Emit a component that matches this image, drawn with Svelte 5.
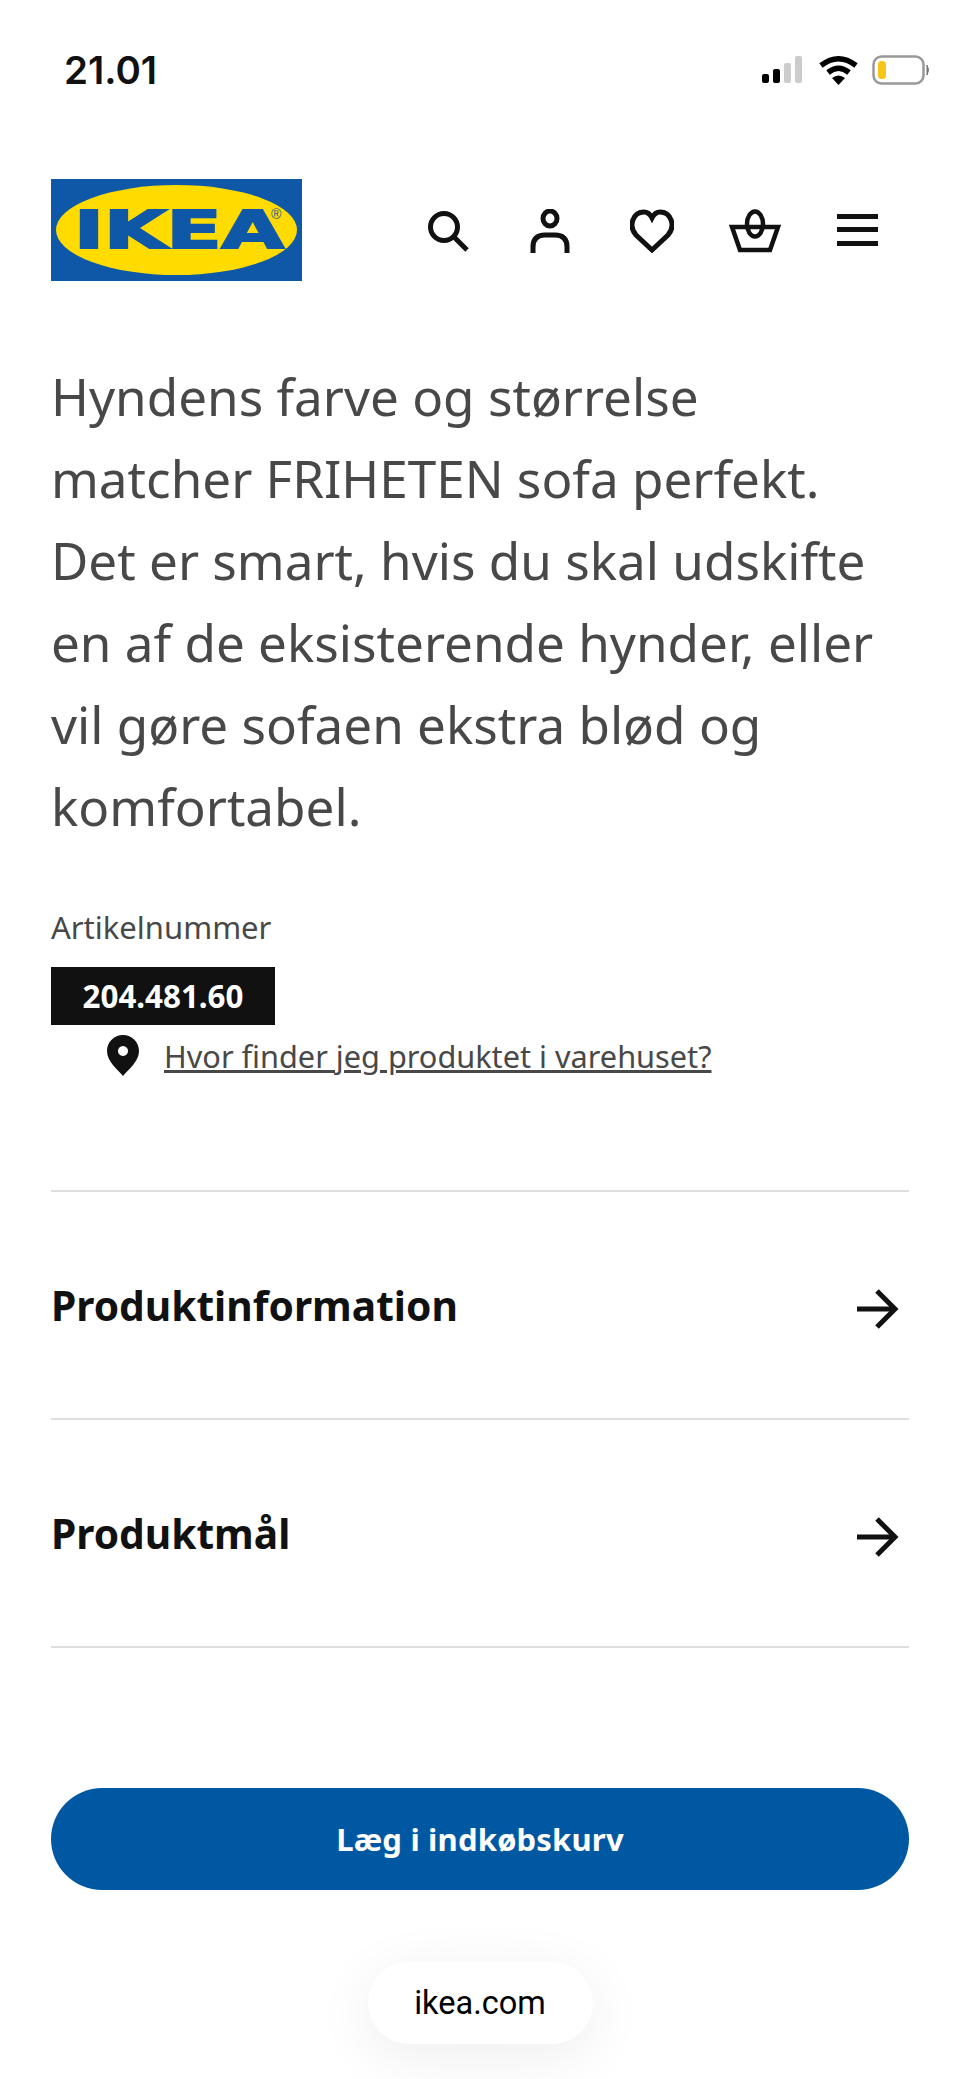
<script>
    const sections = ["Produktinformation", "Produktmål"];
</script>

<main>
    <div class="status">
        <span class="time">21.01</span>
        <div class="status-icons">
            <svg width="44" height="28" viewBox="0 0 44 28">
                <rect x="1" y="18" width="7" height="9" rx="2" fill="#000" />
                <rect x="12" y="13" width="7" height="14" rx="2" fill="#000" />
                <rect x="23" y="7" width="7" height="20" rx="2" fill="#ccc" />
                <rect x="34" y="0" width="7" height="27" rx="2" fill="#ccc" />
            </svg>
            <svg width="39" height="30" viewBox="0 0 39 30">
                <path d="M2 10.500 Q19.500 -3 37 10.500" fill="none" stroke="#000" stroke-width="5.500" />
                <path d="M9 17.500 Q19.500 9 30 17.500" fill="none" stroke="#000" stroke-width="5.500" />
                <path d="M13 23 Q19.500 18 26 23 L19.500 30 Z" fill="#000" />
            </svg>
            <svg width="59" height="30" viewBox="0 0 59 30">
                <rect x="1.500" y="1.500" width="50" height="27" rx="8" fill="none" stroke="#999" stroke-width="2.500" />
                <rect x="6" y="6" width="8" height="18" rx="3.500" fill="#f5c518" />
                <path d="M55 10 Q58 15 55 20 Z" fill="#777" stroke="#777" />
            </svg>
        </div>
    </div>

    <header>
        <svg class="logo" width="251" height="102" viewBox="0 0 251 102">
            <rect width="251" height="102" fill="#0f58a8" />
            <ellipse cx="125.500" cy="51" rx="120.500" ry="45" fill="#ffdb00" />
            <text x="23" y="68.500" class="wordmark" textLength="210" lengthAdjust="spacingAndGlyphs">IKEA</text>
            <text x="220" y="40" class="registered">®</text>
        </svg>
        <nav>
            <svg width="44" height="44" viewBox="0 0 44 44" fill="none" stroke="#111" stroke-width="5">
                <circle cx="18" cy="18" r="13.500" />
                <path d="M27 27 L41 41" />
            </svg>
            <svg width="44" height="44" viewBox="0 0 44 44" fill="none" stroke="#111" stroke-width="5">
                <ellipse cx="22" cy="9.500" rx="7" ry="7.500" />
                <path d="M5 44 V38 Q5 26 17 26 H27 Q39 26 39 38 V44" />
            </svg>
            <svg width="44" height="44" viewBox="0 0 44 44" fill="none" stroke="#111" stroke-width="5">
                <path d="M22 41 L6 26 C-2 17 3 3 14 3 C18 3 20 5 22 9 C24 5 26 3 30 3 C41 3 46 17 38 26 Z" />
            </svg>
            <svg class="basket" width="52" height="44" viewBox="0 0 52 44" fill="none" stroke="#111" stroke-width="4.500">
                <path d="M3 18 H49 L41 41 H11 Z" />
                <ellipse cx="26" cy="15" rx="8" ry="12.500" />
            </svg>
            <svg width="44" height="44" viewBox="0 0 44 44" fill="#111">
                <rect x="1" y="5" width="41" height="5" />
                <rect x="1" y="18" width="41" height="5" />
                <rect x="1" y="32" width="41" height="5" />
            </svg>
        </nav>
    </header>

    <p class="description">
        Hyndens farve og størrelse<br />
        matcher FRIHETEN sofa perfekt.<br />
        Det er smart, hvis du skal udskifte<br />
        en af de eksisterende hynder, eller<br />
        vil gøre sofaen ekstra blød og<br />
        komfortabel.
    </p>

    <div class="article-label">Artikelnummer</div>
    <div class="article-number">204.481.60</div>
    <div class="store-link">
        <svg width="32" height="42" viewBox="0 0 32 42">
            <path fill-rule="evenodd" fill="#111" d="M16 0 C7 0 0 7 0 16 C0 26 10 34 16 41 C22 34 32 26 32 16 C32 7 25 0 16 0 Z M16 11 a5 5 0 1 0 0.010 0 Z" />
        </svg>
        <a href="#top">Hvor finder jeg produktet i varehuset?</a>
    </div>

    <div class="sections">
        {#each sections as section}
            <div class="section-row">
                <span>{section}</span>
                <svg class="arrow" width="44" height="40" viewBox="0 0 44 40" fill="none" stroke="#111" stroke-width="5">
                    <path d="M1 20 H39" />
                    <path d="M21 2 L39 20 L21 38" />
                </svg>
            </div>
        {/each}
    </div>

    <button type="button">Læg i indkøbskurv</button>

    <div class="url-pill">ikea.com</div>
</main>

<style>
    :global(body) {
        background: #fff;
    }

    main {
        box-sizing: border-box;
        display: flex;
        flex-direction: column;
        font-family: "Noto Sans", sans-serif;
        height: 2079px;
        overflow: hidden;
        padding: 0 51px;
        width: 960px;
    }

    .status {
        align-items: center;
        display: flex;
        height: 70px;
        justify-content: space-between;
        margin: 35px -22px 0 0;
        padding-left: 13px;
    }

    .time {
        color: #111;
        font-family: Inter, sans-serif;
        font-size: 38.500px;
        font-weight: 600;
    }

    .status-icons {
        align-items: center;
        display: flex;
        gap: 14px;
    }

    header {
        align-items: center;
        display: flex;
        justify-content: space-between;
        margin-top: 74px;
    }

    .logo {
        display: block;
    }

    .wordmark {
        fill: #0f58a8;
        font-family: "DejaVu Sans", sans-serif;
        font-size: 51px;
        font-weight: 700;
        stroke: #0f58a8;
        stroke-width: 2px;
    }

    .registered {
        fill: #0f58a8;
        font-family: "Liberation Sans", sans-serif;
        font-size: 14px;
    }

    nav {
        align-items: center;
        display: flex;
        gap: 58px;
        padding: 2px 29px 0 0;
    }

    .basket {
        margin: 0 -3px;
    }

    .description {
        color: #484848;
        font-size: 51.200px;
        line-height: 82px;
        margin: 74px 0 0;
    }

    .article-label {
        color: #484848;
        font-size: 31px;
        line-height: 42px;
        margin-top: 59px;
    }

    .article-number {
        background: #111;
        color: #fff;
        font-size: 31.300px;
        font-weight: 700;
        line-height: 58px;
        margin-top: 19px;
        text-align: center;
        width: 224px;
    }

    .store-link {
        align-items: center;
        display: flex;
        gap: 26px;
        margin-top: 10px;
        padding-left: 56px;
    }

    .store-link a {
        color: #484848;
        font-size: 30.700px;
        line-height: 42px;
        margin-left: -1px;
    }

    .sections {
        border-top: 2px solid #dfdfdf;
        margin-top: 113px;
    }

    .section-row {
        align-items: center;
        border-bottom: 2px solid #dfdfdf;
        color: #111;
        display: flex;
        font-size: 40.700px;
        font-weight: 700;
        height: 226px;
        justify-content: space-between;
        padding-right: 9px;
    }

    .arrow {
        margin-top: 8px;
    }

    button {
        background: #0058a3;
        border: 0;
        border-radius: 51px;
        color: #fff;
        flex-shrink: 0;
        font-family: inherit;
        font-size: 31px;
        font-weight: 700;
        height: 102px;
        letter-spacing: 0.2px;
        margin-top: 140px;
        width: 858px;
    }

    .url-pill {
        align-self: center;
        background: #fff;
        border-radius: 41px;
        box-shadow: 0 12px 60px rgba(0, 0, 0, 0.07);
        color: #000;
        flex-shrink: 0;
        font-family: Roboto, sans-serif;
        font-size: 32.500px;
        height: 82px;
        line-height: 82px;
        margin-top: 72px;
        text-align: center;
        width: 225px;
    }
</style>
